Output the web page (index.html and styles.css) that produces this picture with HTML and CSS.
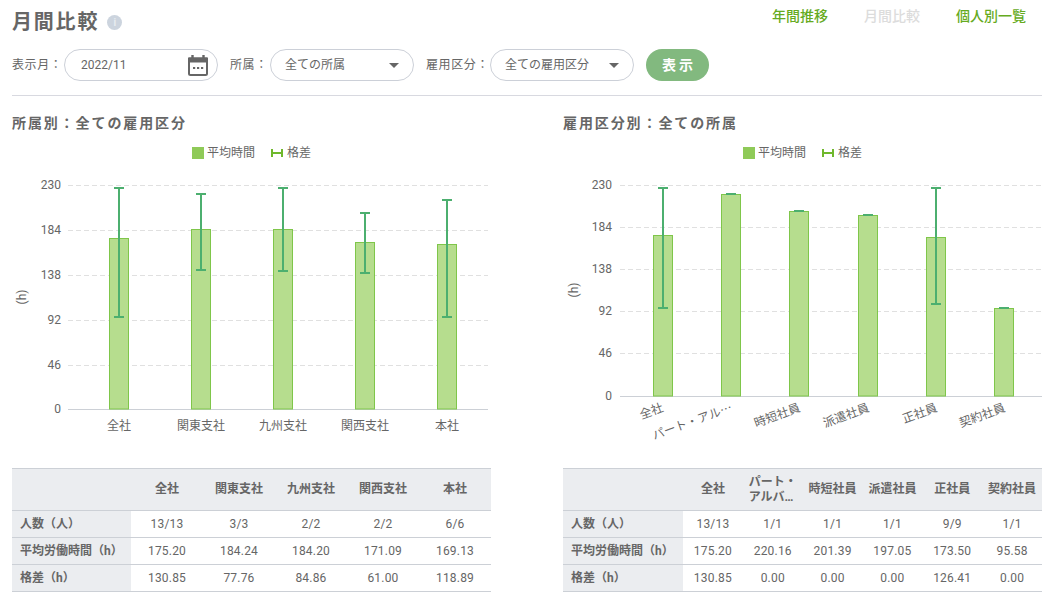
FILE: index.html
```html
<!DOCTYPE html>
<html lang="ja">
<head>
<meta charset="utf-8">
<title>月間比較</title>
<link rel="stylesheet" href="styles.css">
</head>
<body>
<div class="page">
  <header class="top">
    <div class="title-wrap">
      <h1 class="title">月間比較</h1>
      <span class="info">i</span>
    </div>
    <nav class="nav">
      <a class="nav-link">年間推移</a>
      <a class="nav-link nav-off">月間比較</a>
      <a class="nav-link">個人別一覧</a>
    </nav>
  </header>

  <div class="filters">
    <label class="flabel">表示月：</label>
    <div class="field field-date"><span>2022/11</span>
      <svg class="cal" width="20" height="22" viewBox="0 0 20 22"><path d="M1 4.500H19V19.500a1.500 1.500 0 0 1-1.500 1.500H2.500a1.500 1.500 0 0 1-1.500-1.500Z" fill="#fff" stroke="#666" stroke-width="2"/><path d="M1 3.500h18v5H1z" fill="#666"/><path d="M4.500 1v4M15.500 1v4" stroke="#666" stroke-width="2.400"/><path d="M5 13h2.200v2H5zM9 13h2.200v2H9zM13 13h2.200v2H13z" fill="#666"/></svg>
    </div>
    <label class="flabel flabel-b">所属：</label>
    <div class="field field-sel"><span>全ての所属</span><i class="caret"></i></div>
    <label class="flabel flabel-c">雇用区分：</label>
    <div class="field field-sel"><span>全ての雇用区分</span><i class="caret"></i></div>
    <button class="show">表示</button>
  </div>

  <div class="cols">
    <section class="col">
      <h2 class="sub">所属別：全ての雇用区分</h2>
      <div class="legend">
        <i class="sw"></i><span>平均時間</span>
        <svg class="eb" width="12" height="8" viewBox="0 0 12 8"><path d="M1 0v8M11 0v8M1 4h10" stroke="#6fb82c" stroke-width="2" fill="none"/></svg><span>格差</span>
      </div>
      <svg class="chart" width="479" height="290" viewBox="12 166 479 290">
        <g class="grid">
          <path d="M68 185.500H488M68 230.500H488M68 275.500H488M68 320.500H488M68 365.500H488"/>
        </g>
        <path class="axis" d="M68 409.500H488"/>
        <g class="yl">
          <text x="61" y="189">230</text><text x="61" y="234">184</text><text x="61" y="279">138</text><text x="61" y="324">92</text><text x="61" y="369">46</text><text x="61" y="413">0</text>
        </g>
        <text class="unit" transform="translate(26 297) rotate(-90)">(h)</text>
        <g class="bar">
          <rect x="109.500" y="238.500" width="19" height="170.500"/>
          <rect x="191.500" y="229.500" width="19" height="179.500"/>
          <rect x="273.500" y="229.500" width="19" height="179.500"/>
          <rect x="355.500" y="242.500" width="19" height="166.500"/>
          <rect x="437.500" y="244.500" width="19" height="164.500"/>
        </g>
        <g class="err">
          <path d="M119 188V317M114 188H124M114 317H124"/>
          <path d="M201 194V270M196 194H206M196 270H206"/>
          <path d="M283 188V271M278 188H288M278 271H288"/>
          <path d="M365 213V273M360 213H370M360 273H370"/>
          <path d="M447 200V317M442 200H452M442 317H452"/>
        </g>
        <g class="xl">
          <text x="119" y="430">全社</text><text x="201" y="430">関東支社</text><text x="283" y="430">九州支社</text><text x="365" y="430">関西支社</text><text x="447" y="430">本社</text>
        </g>
      </svg>
      <table class="tbl tbl-five">
        <thead><tr><th class="rh"></th><th>全社</th><th>関東支社</th><th>九州支社</th><th>関西支社</th><th>本社</th></tr></thead>
        <tbody>
          <tr><th class="rh">人数（人）</th><td>13/13</td><td>3/3</td><td>2/2</td><td>2/2</td><td>6/6</td></tr>
          <tr><th class="rh">平均労働時間（h）</th><td>175.20</td><td>184.24</td><td>184.20</td><td>171.09</td><td>169.13</td></tr>
          <tr><th class="rh">格差（h）</th><td>130.85</td><td>77.76</td><td>84.86</td><td>61.00</td><td>118.89</td></tr>
        </tbody>
      </table>
    </section>

    <section class="col">
      <h2 class="sub">雇用区分別：全ての所属</h2>
      <div class="legend">
        <i class="sw"></i><span>平均時間</span>
        <svg class="eb" width="12" height="8" viewBox="0 0 12 8"><path d="M1 0v8M11 0v8M1 4h10" stroke="#6fb82c" stroke-width="2" fill="none"/></svg><span>格差</span>
      </div>
      <svg class="chart" width="479" height="290" viewBox="563 166 479 290">
        <g class="grid">
          <path d="M620 185.500H1042M620 227.500H1042M620 269.500H1042M620 311.500H1042M620 353.500H1042"/>
        </g>
        <path class="axis" d="M620 396.500H1042"/>
        <g class="yl">
          <text x="612" y="189">230</text><text x="612" y="231">184</text><text x="612" y="273">138</text><text x="612" y="315">92</text><text x="612" y="357">46</text><text x="612" y="400">0</text>
        </g>
        <text class="unit" transform="translate(578 290) rotate(-90)">(h)</text>
        <g class="bar">
          <rect x="653.500" y="235.500" width="19" height="160.500"/>
          <rect x="721.500" y="194.500" width="19" height="201.500"/>
          <rect x="789.500" y="211.500" width="19" height="184.500"/>
          <rect x="858.500" y="215.500" width="19" height="180.500"/>
          <rect x="926.500" y="237.500" width="19" height="158.500"/>
          <rect x="994.500" y="308.500" width="19" height="87.500"/>
        </g>
        <g class="err">
          <path d="M663 188V308M658 188H668M658 308H668"/>
          <path d="M726 194H736"/>
          <path d="M794 211H804"/>
          <path d="M863 215H873"/>
          <path d="M936 188V304M931 188H941M931 304H941"/>
          <path d="M999 308H1009"/>
        </g>
        <g class="xr">
          <text transform="translate(664 411) rotate(-20)">全社</text>
          <text transform="translate(733 411) rotate(-20)">パート・アル…</text>
          <text transform="translate(801 411) rotate(-20)">時短社員</text>
          <text transform="translate(870 411) rotate(-20)">派遣社員</text>
          <text transform="translate(938 411) rotate(-20)">正社員</text>
          <text transform="translate(1006 411) rotate(-20)">契約社員</text>
        </g>
      </svg>
      <table class="tbl tbl-six">
        <thead><tr><th class="rh"></th><th>全社</th><th><span class="two">パート・<br>アルバ…</span></th><th>時短社員</th><th>派遣社員</th><th>正社員</th><th>契約社員</th></tr></thead>
        <tbody>
          <tr><th class="rh">人数（人）</th><td>13/13</td><td>1/1</td><td>1/1</td><td>1/1</td><td>9/9</td><td>1/1</td></tr>
          <tr><th class="rh">平均労働時間（h）</th><td>175.20</td><td>220.16</td><td>201.39</td><td>197.05</td><td>173.50</td><td>95.58</td></tr>
          <tr><th class="rh">格差（h）</th><td>130.85</td><td>0.00</td><td>0.00</td><td>0.00</td><td>126.41</td><td>0.00</td></tr>
        </tbody>
      </table>
    </section>
  </div>
</div>
</body>
</html>
```
FILE: styles.css
```css
* { box-sizing: border-box; }
html, body { margin: 0; padding: 0; background: #fff; }
body {
  font-family: Roboto, "Noto Sans CJK JP", sans-serif;
  color: #666;
  font-size: 12px;
  overflow: hidden;
}
.page { width: 1056px; height: 605px; padding: 0 14px 0 12px; }

.top { display: flex; justify-content: space-between; height: 49px; }
.title-wrap { display: flex; align-items: flex-start; padding-top: 8px; }
.title { margin: 0; font-size: 20px; line-height: 28px; font-weight: 700; letter-spacing: 1.800px; color: #666; }
.info {
  width: 15px; height: 15px; margin: 7px 0 0 8px; border-radius: 50%;
  background: #ccd4de; color: #e8ecf1; font-size: 10px; line-height: 15px; text-align: center; font-weight: 700;
}
.nav { display: flex; gap: 36px; padding: 6px 16px 0 0; }
.nav-link { font-size: 14px; line-height: 20px; font-weight: 500; color: #66ab1f; }
.nav-off { color: #dcdcdc; }

.filters { display: flex; align-items: center; height: 32px; }
.flabel { letter-spacing: .6px; width: 52px; white-space: nowrap; line-height: 30px; }
.flabel-b { width: 40px; margin-left: 12px; }
.flabel-c { width: 64px; margin-left: 12px; }
.field {
  display: flex; align-items: center; justify-content: space-between;
  height: 32px; border: 1px solid #ccd0d8; border-radius: 16px; background: #fff;
}
.field span { line-height: 28px; }
.field-date { width: 154px; padding: 0 9px 0 16px; }
.field-sel { width: 144px; padding: 0 14px; }
.cal { display: block; }
.caret {
  width: 0; height: 0;
  border-left: 5px solid transparent; border-right: 5px solid transparent; border-top: 5px solid #666;
}
.show {
  margin-left: 12px; width: 63px; height: 32px; border: 0; border-radius: 16px; padding: 0 0 2px 3px;
  background: #82b97f; color: #fff; font: 700 14px Roboto, "Noto Sans CJK JP", sans-serif; letter-spacing: 3px;
}

.cols {
  display: grid; grid-template-columns: 479px 479px; gap: 72px;
  margin-top: 14px; padding-top: 17px; border-top: 1px solid #d8d9e0;
  width: 1030px;
}
.sub { margin: 0; font-size: 14px; line-height: 20px; font-weight: 700; letter-spacing: 1.900px; color: #666; }
.legend { display: flex; justify-content: center; align-items: center; height: 20px; margin-top: 10px; line-height: 20px; }
.sw { width: 12px; height: 12px; background: #8fca58; margin-right: 3px; }
.eb { margin: 0 4px 0 16px; }

.chart { display: block; margin-top: 3px; overflow: visible; }
.grid path { stroke: #e0e0e0; stroke-width: 1; stroke-dasharray: 5 3; fill: none; }
.axis { stroke: #ccd0d6; stroke-width: 1; fill: none; }
.yl text { font: 12px Roboto, sans-serif; fill: #666; text-anchor: end; }
.unit { font: 12px Roboto, sans-serif; fill: #666; text-anchor: middle; }
.bar rect { fill: #b6dd8e; stroke: #7fc64a; stroke-width: 1; }
.err path { stroke: #4caf6f; stroke-width: 2; fill: none; }
.xl text { font: 12px "Noto Sans CJK JP", sans-serif; fill: #666; text-anchor: middle; }
.xr text { font: 12px "Noto Sans CJK JP", sans-serif; fill: #666; text-anchor: end; }

.tbl {
  width: 479px; margin-top: 12px; border-collapse: collapse; table-layout: fixed;
  border-top: 1px solid #ccd0d6; border-bottom: 1px solid #ccd0d6;
}
.tbl tr { border-bottom: 1px solid #ccd0d6; }
.tbl tbody tr:last-child { border-bottom: 0; }
.tbl thead tr { height: 42px; }
.tbl tbody tr { height: 27px; }
.tbl th { background: #ebedf0; font-weight: 700; padding: 0; font-size: 12px; line-height: 15px; color: #666; text-align: center; }
.tbl td { text-align: center; padding: 0; font-size: 12px; letter-spacing: .2px; color: #666; }
.tbl .rh { width: 119px; text-align: left; padding-left: 8px; white-space: nowrap; }
.tbl-six .rh { width: 120px; }
.two { display: inline-block; text-align: left; }
```
